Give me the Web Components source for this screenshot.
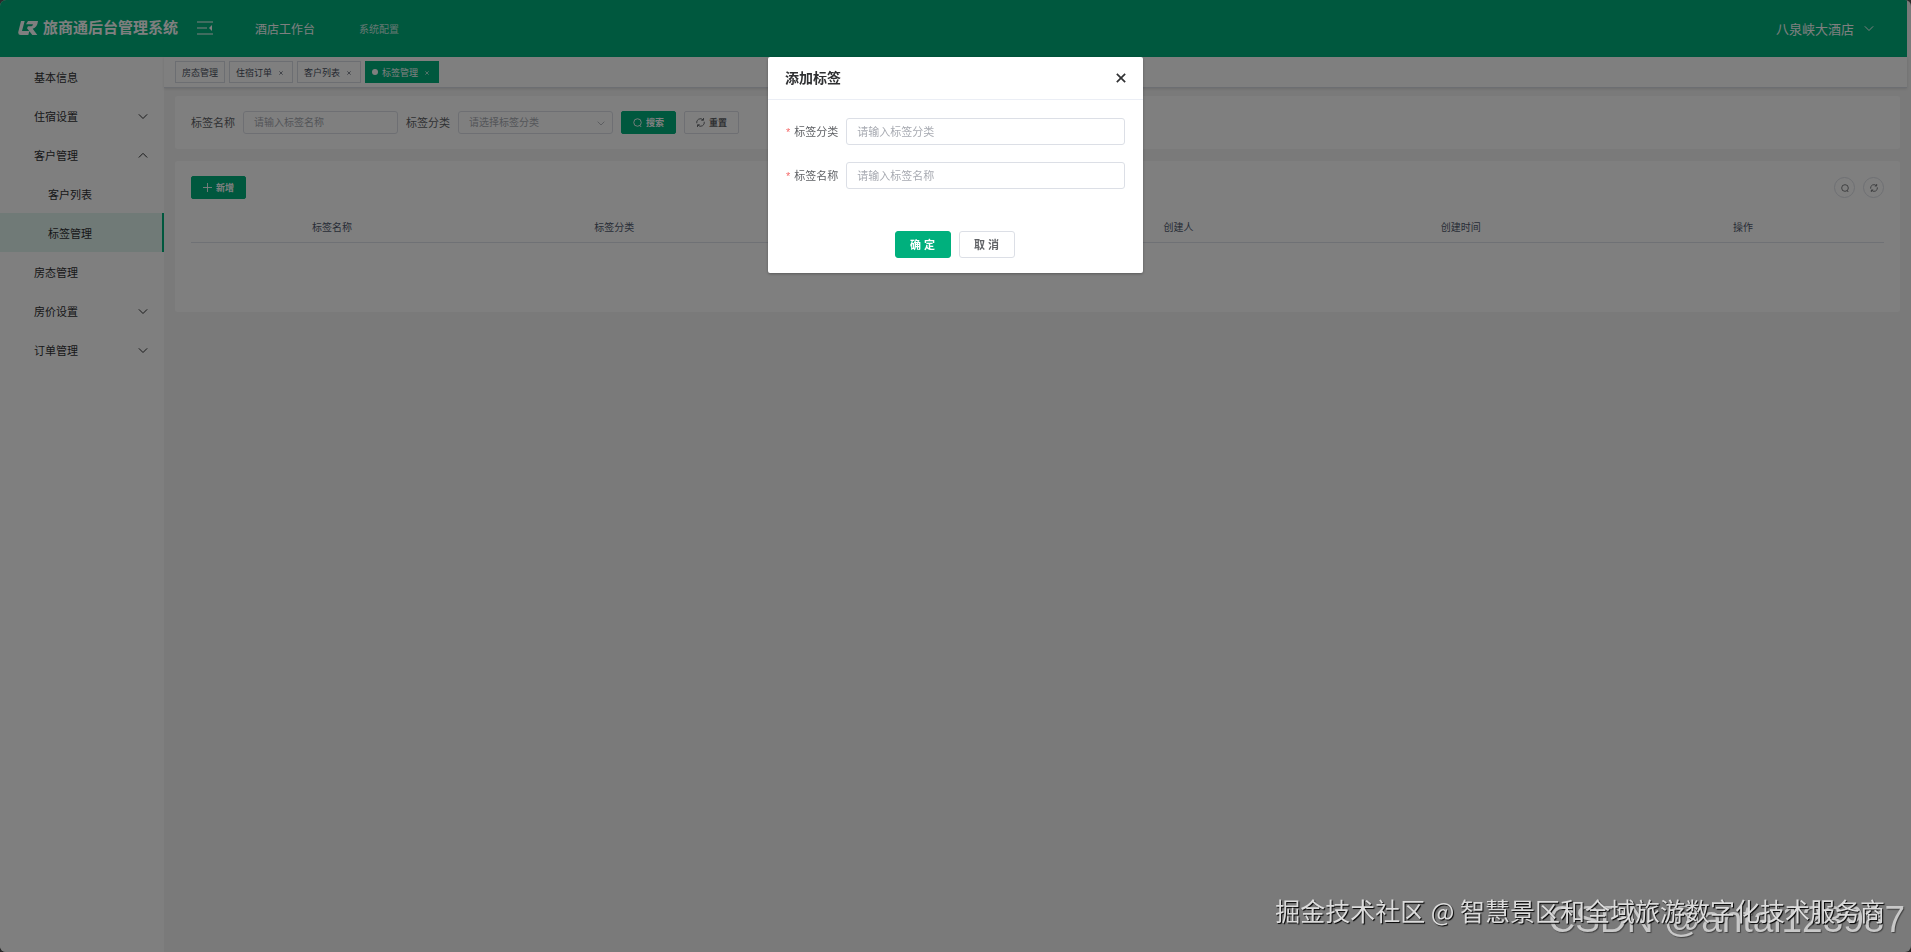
<!DOCTYPE html>
<html lang="zh-CN">
<head>
<meta charset="utf-8">
<title>旅商通后台管理系统</title>
<style>
html, body { margin: 0; height: 100%; }
body { font-family: "Liberation Sans", "Noto Sans CJK SC", sans-serif; overflow: hidden; background: #555; }
</style>
</head>
<body>
<hotel-app></hotel-app>

<script>
const icons = {
  down: '<path d="M1 4l5 5 5-5"/>',
  up: '<path d="M1 9l5-5 5 5"/>',
  plus: '<path d="M6 0v12M0 6h12"/>',
  close: '<path d="M1 1l10 10M11 1L1 11"/>',
  search: '<circle cx="6" cy="6" r="5"/><path d="M9 10l2 2"/>',
  refresh: '<path d="M1 7A5 5 0 0 1 9.500 2.500M11 5A5 5 0 0 1 2.500 9.500M10 0v3H7M2 12V9h3"/>',
};

function define(name, html, setup) {
  const tpl = document.createElement("template");
  tpl.innerHTML = `<style>*{box-sizing:border-box}</style>` + html;
  customElements.define(name, class extends HTMLElement {
    constructor() {
      super();
      this.attachShadow({ mode: "open" }).appendChild(tpl.content.cloneNode(true));
    }
    connectedCallback() {
      if (setup) setup(this, this.shadowRoot);
    }
  });
}

define("ui-icon", `
<style>
:host { display: inline-flex; flex: none; width: 12px; height: 12px; }
svg { width: 100%; height: 100%; fill: none; stroke: currentColor; stroke-width: var(--stroke, 1.2); overflow: visible; }
</style>
<svg viewBox="0 0 12 12" aria-hidden="true"></svg>`, (el, root) => {
  root.querySelector("svg").innerHTML = icons[el.getAttribute("name")];
});

define("ui-button", `
<style>
:host { display: block; flex: none; }
button { display: flex; align-items: center; justify-content: center; gap: 4px; width: 55px; height: 23px;
  padding: 0; border: 1px solid #dcdfe6; border-radius: 2px; background: #fff; color: #606266;
  font: bold 9px/12px "Liberation Sans", "Noto Sans CJK SC", sans-serif; }
:host([primary]) button { background: #00b07d; border-color: #00b07d; color: #fff; }
:host([large]) button { width: 56px; height: 27px; font-size: 11px; border-radius: 3px; }
:host([round]) button { width: 21px; height: 21px; border-radius: 50%; }
ui-icon { width: 9px; height: 9px; }
:host([round]) ui-icon { width: 8px; height: 8px; }
</style>
<button type="button"><slot></slot></button>`, (el, root) => {
  const name = el.getAttribute("icon");
  if (name && !root.querySelector("ui-icon")) {
    const icon = document.createElement("ui-icon");
    icon.setAttribute("name", name);
    root.querySelector("button").prepend(icon);
  }
  if (el.title) root.querySelector("button").setAttribute("aria-label", el.title);
});

define("ui-field", `
<style>
:host { display: flex; align-items: center; color: #606266; font-size: 11px; }
label { flex: none; margin-right: 8px; padding-bottom: 1px; }
i { color: #f56c6c; font-style: normal; margin-right: 4px; }
.box { position: relative; flex: 1; min-width: 0; display: flex; }
input, select { width: 100%; height: 23px; padding: 0 10px 1px; border: 1px solid #dcdfe6; border-radius: 3px;
  background: #fff; color: #a8abb2; font: 10px "Liberation Sans", "Noto Sans CJK SC", sans-serif; outline: 0; appearance: none; }
input::placeholder { color: #a8abb2; }
:host([required]) input { height: 27px; padding-bottom: 0; font-size: 11px; }
ui-icon { position: absolute; right: 8px; top: 8px; width: 8px; height: 8px; color: #a8abb2; }
</style>
<label for="c"></label><div class="box"></div>`, (el, root) => {
  const hint = el.getAttribute("hint");
  const star = el.hasAttribute("required") ? "<i>*</i>" : "";
  root.querySelector("label").innerHTML = star + el.getAttribute("label");
  root.querySelector(".box").innerHTML = el.hasAttribute("select")
    ? `<select id="c"><option>${hint}</option></select><ui-icon name="down"></ui-icon>`
    : `<input id="c" type="text" placeholder="${hint}">`;
});

define("app-header", `
<style>
:host { display: flex; align-items: center; height: 57px; margin-right: 4px; padding: 0 33px 1px 18px; background: #00b07d; color: #fff; }
.logo { width: 20px; height: 14px; margin-right: 5px; fill: #fff; }
h1 { margin: 0; font-size: 15px; line-height: 22px; }
.fold { width: 16px; height: 14px; margin: 0 42px 0 19px; padding: 0; border: 0; background: none; color: #fff; }
.fold svg { display: block; width: 16px; height: 14px; fill: none; stroke: #fff; stroke-width: 1.2; }
a { color: #fff; text-decoration: none; font-size: 12px; }
a + a { margin-left: 44px; font-size: 10px; color: #ffffffcc; }
.hotel { display: flex; align-items: center; gap: 10px; margin-left: auto; padding: 0; border: 0; background: none; color: #fff;
  font: 13px "Liberation Sans", "Noto Sans CJK SC", sans-serif; }
ui-icon { width: 10px; height: 10px; }
</style>
<svg class="logo" viewBox="0 0 60 42" aria-hidden="true"><path d="M9 0H20L12 30H34L31 42H8Q-1 42 1 32ZM30 0H60Q58 20 44 23L58 42H43L27 22 30 16H40Q44 16 45 10H24Z"/></svg>
<h1>旅商通后台管理系统</h1>
<button class="fold" aria-label="收起菜单"><svg viewBox="0 0 16 14"><path d="M0 1h16M0 7h10M0 13h16"/><path d="M15 4v6l-3-3z" fill="#fff" stroke="none"/></svg></button>
<a href="#">酒店工作台</a><a href="#">系统配置</a>
<button class="hotel">八泉峡大酒店<ui-icon name="down"></ui-icon></button>`);

define("menu-item", `
<style>
:host { display: block; }
a { display: flex; align-items: center; justify-content: space-between; height: 39px; padding: 0 16px 0 34px;
  color: #303133; font-size: 11px; text-decoration: none; }
:host([child]) a { padding-left: 48px; }
:host([active]) a { background: #e0f4ee; border-right: 2px solid #00b07d; }
ui-icon { width: 10px; height: 10px; }
</style>
<a href="#"><slot></slot></a>`, (el, root) => {
  const arrow = el.getAttribute("arrow");
  if (arrow) root.querySelector("a").insertAdjacentHTML("beforeend", `<ui-icon name="${arrow}"></ui-icon>`);
});

define("side-menu", `
<style>
:host { display: block; flex: none; width: 164px; background: #fff; }
</style>
<nav>
<menu-item>基本信息</menu-item>
<menu-item arrow="down">住宿设置</menu-item>
<menu-item arrow="up">客户管理</menu-item>
<menu-item child>客户列表</menu-item>
<menu-item child active>标签管理</menu-item>
<menu-item>房态管理</menu-item>
<menu-item arrow="down">房价设置</menu-item>
<menu-item arrow="down">订单管理</menu-item>
</nav>`);

define("page-tab", `
<style>
:host { display: flex; align-items: center; height: 22px; padding: 0 6px; border: 1px solid #d8dce5; color: #495060; background: #fff; font-size: 9px; }
:host([closable]) { padding-right: 9px; }
:host([active]) { background: #00b07d; border-color: #00b07d; color: #fff; }
.dot { display: none; width: 6px; height: 6px; margin-right: 4px; border-radius: 50%; background: #fff; }
:host([active]) .dot { display: block; }
button { display: none; width: 4px; height: 4px; margin: 2px 0 0 7px; padding: 0; border: 0; background: none; color: inherit; }
:host([closable]) button { display: flex; }
ui-icon { width: 4px; height: 4px; --stroke: 2; }
</style>
<span class="dot"></span><slot></slot><button aria-label="关闭"><ui-icon name="close"></ui-icon></button>`);

define("tab-bar", `
<style>
:host { display: flex; align-items: center; gap: 4px; height: 31px; margin-right: 4px; padding: 0 11px; background: #fff;
  border-bottom: 1px solid #d8dce5; box-shadow: 0 1px 3px #0000001f; position: relative; }
</style>
<page-tab>房态管理</page-tab>
<page-tab closable>住宿订单</page-tab>
<page-tab closable>客户列表</page-tab>
<page-tab closable active>标签管理</page-tab>`);

define("ui-card", `
<style>
:host { display: block; margin: 0 11px 12px; padding: 15px 16px; background: #fff; border-radius: 3px; }
</style>
<slot></slot>`);

define("tag-page", `
<style>
:host { display: block; padding-top: 8px; }
.search { display: flex; align-items: center; gap: 8px; }
.search ui-field { width: 207px; }
.tools { display: flex; align-items: center; gap: 8px; }
.tools ui-button[primary] { margin-right: auto; }
table { width: 100%; margin-top: 12px; border-collapse: collapse; table-layout: fixed; color: #515a6e; font-size: 10px; }
th { height: 31px; padding: 0; border-bottom: 1px solid #dfe3ea; font-weight: normal; }
td { height: 55px; padding: 0; }
</style>
<ui-card><div class="search">
<ui-field label="标签名称" hint="请输入标签名称"></ui-field>
<ui-field select label="标签分类" hint="请选择标签分类"></ui-field>
<ui-button primary icon="search">搜索</ui-button>
<ui-button icon="refresh">重置</ui-button>
</div></ui-card>
<ui-card>
<div class="tools">
<ui-button primary icon="plus">新增</ui-button>
<ui-button round icon="search" title="搜索"></ui-button>
<ui-button round icon="refresh" title="刷新"></ui-button>
</div>
<table>
<thead><tr><th>标签名称</th><th>标签分类</th><th></th><th>创建人</th><th>创建时间</th><th>操作</th></tr></thead>
<tbody><tr><td colspan="6"></td></tr></tbody>
</table>
</ui-card>`);

define("tag-dialog", `
<style>
:host { display: block; width: 375px; background: #fff; border-radius: 2px; box-shadow: 0 1px 3px #0000004d; }
header { display: flex; align-items: center; justify-content: space-between; height: 43px; padding: 0 17px 1px; border-bottom: 1px solid #ebeef5; }
h2 { margin: 0; color: #303133; font-size: 14px; line-height: 20px; }
header button { display: flex; padding: 0; border: 0; background: none; color: #303133; }
header ui-icon { width: 10px; height: 10px; --stroke: 2; }
form { display: flex; flex-direction: column; gap: 17px; padding: 18px 18px 42px; }
footer { display: flex; justify-content: center; gap: 8px; padding: 0 2px 15px 0; }
</style>
<header><h2>添加标签</h2><button aria-label="关闭"><ui-icon name="close"></ui-icon></button></header>
<form>
<ui-field required label="标签分类" hint="请输入标签分类"></ui-field>
<ui-field required label="标签名称" hint="请输入标签名称"></ui-field>
</form>
<footer><ui-button primary large>确 定</ui-button><ui-button large>取 消</ui-button></footer>`);

define("hotel-app", `
<style>
:host { display: flex; flex-direction: column; height: 100%; background: #f5f5f5; border-radius: 6px; overflow: hidden; }
.body { display: flex; flex: 1; min-height: 0; }
main { flex: 1; min-width: 0; }
.mask { position: fixed; inset: 0; display: flex; justify-content: center; align-items: flex-start; padding-top: 57px; background: #00000080; }
.mark { position: fixed; white-space: nowrap; color: #dcdcdc; }
.juejin { right: 26px; bottom: 24px; font-family: "Noto Sans CJK SC", sans-serif; font-size: 25px; line-height: 36px; text-shadow: 1px 1px 1px #000; }
.csdn { right: 6px; bottom: 12px; font-size: 37px; line-height: 40px; color: #c8c8c8; text-shadow: 1px 1px 1px #444; }
</style>
<app-header></app-header>
<div class="body">
<side-menu></side-menu>
<main><tab-bar></tab-bar><tag-page></tag-page></main>
</div>
<div class="mask"><tag-dialog role="dialog" aria-label="添加标签"></tag-dialog></div>
<div class="mark csdn">CSDN @antai123987</div>
<div class="mark juejin">掘金技术社区 @ 智慧景区和全域旅游数字化技术服务商</div>`);
</script>
</body>
</html>
